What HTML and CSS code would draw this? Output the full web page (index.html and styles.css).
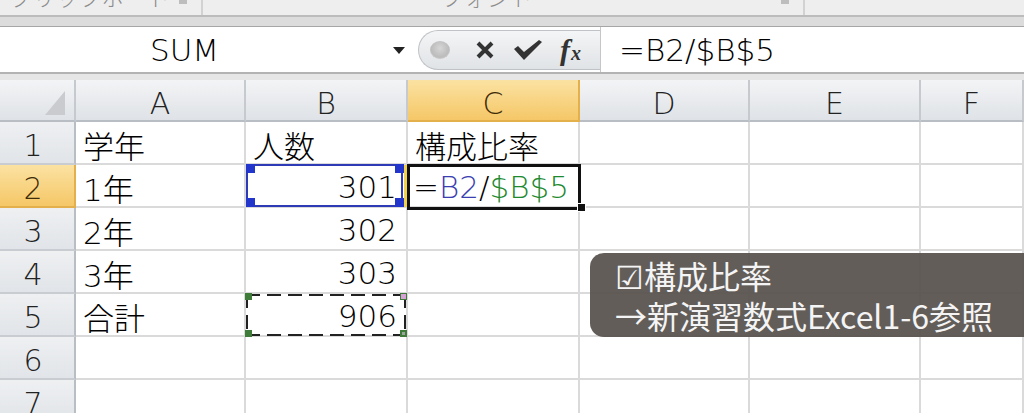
FILE: index.html
```html
<!DOCTYPE html>
<html lang="ja">
<head>
<meta charset="utf-8">
<title>Excel 構成比率</title>
<link rel="stylesheet" href="styles.css">
</head>
<body>
<div class="screen">
  <div class="ribbon">
    <div class="rgroup g1"><span class="rlabel">クリップボード</span><span class="launch"></span></div>
    <div class="rgroup g2"><span class="rlabel">フォント</span><span class="launch"></span></div>
    <div class="rgroup g3"></div>
  </div>
  <div class="sep1"></div>
  <div class="fbar">
    <div class="namebox"><span class="name">SUM</span><span class="arrow"></span></div>
    <div class="pill">
      <span class="knob"></span>
      <svg class="ico-x" width="20" height="20" viewBox="0 0 20 20"><path d="M3 3 L17 17 M17 3 L3 17" stroke="#333" stroke-width="4" fill="none"/></svg>
      <svg class="ico-check" width="30" height="22" viewBox="0 0 30 22"><path d="M1 10 L5 7 L11 13 L26 1 L29 3 L11 21 Z" fill="#333"/></svg>
      <span class="fx"><i class="fx-f">f</i><i class="fx-x">x</i></span>
    </div>
    <div class="finput">=B2/$B$5</div>
  </div>
  <div class="sep2"></div>
  <div class="sheet">
    <div class="ch corner"><svg width="20" height="24" viewBox="0 0 20 24"><polygon points="20,0 20,24 0,24" fill="#c9cbce"/></svg></div>
    <div class="ch">A</div>
    <div class="ch">B</div>
    <div class="ch hl">C</div>
    <div class="ch">D</div>
    <div class="ch">E</div>
    <div class="ch">F</div>

    <div class="rh">1</div>
    <div class="c">学年</div>
    <div class="c">人数</div>
    <div class="c">構成比率</div>
    <div class="c"></div>
    <div class="c"></div>
    <div class="c"></div>

    <div class="rh hl">2</div>
    <div class="c">1年</div>
    <div class="c num">301<span class="ref-blue"><span class="k tl"></span><span class="k tr"></span><span class="k bl"></span><span class="k br"></span></span><span class="yl"></span></div>
    <div class="c edit">=<span class="blue">B2</span>/<span class="green">$B$5</span><span class="active"></span><span class="handle"></span></div>
    <div class="c"></div>
    <div class="c"></div>
    <div class="c"></div>

    <div class="rh">3</div>
    <div class="c">2年</div>
    <div class="c num">302</div>
    <div class="c"></div>
    <div class="c"></div>
    <div class="c"></div>
    <div class="c"></div>

    <div class="rh">4</div>
    <div class="c">3年</div>
    <div class="c num">303</div>
    <div class="c"></div>
    <div class="c"></div>
    <div class="c"></div>
    <div class="c"></div>

    <div class="rh">5</div>
    <div class="c">合計</div>
    <div class="c num">906<span class="ants"><span class="g tl"></span><span class="g tr"></span><span class="g bl"></span><span class="g br"></span></span></div>
    <div class="c"></div>
    <div class="c"></div>
    <div class="c"></div>
    <div class="c"></div>

    <div class="rh">6</div>
    <div class="c"></div>
    <div class="c"></div>
    <div class="c"></div>
    <div class="c"></div>
    <div class="c"></div>
    <div class="c"></div>

    <div class="rh">7</div>
    <div class="c"></div>
    <div class="c"></div>
    <div class="c"></div>
    <div class="c"></div>
    <div class="c"></div>
    <div class="c"></div>
  </div>
  <div class="note">
    <div class="nline">☑構成比率</div>
    <div class="nline">→新演習数式Excel1-6参照</div>
  </div>
</div>
</body>
</html>
```

FILE: styles.css
```css
* { box-sizing: border-box; }
html, body { margin: 0; padding: 0; background: #fff; }
.screen {
  width: 1024px;
  height: 413px;
  overflow: hidden;
  position: relative;
  background: #fff;
  font-family: "DejaVu Sans", "Noto Sans CJK JP", sans-serif;
  font-weight: 300;
  color: #000;
}

/* ribbon group labels (cut off at top) */
.ribbon { display: flex; height: 15px; background: #eeeeee; overflow: hidden; }
.rgroup { display: flex; align-items: flex-start; border-right: 2px solid #d2d2d2; height: 15px; }
.g1 { width: 203px; padding-left: 10px; }
.g2 { width: 602px; padding-left: 238px; }
.g3 { flex: 1; border-right: none; }
.rlabel {
  font-family: "Noto Sans CJK JP", sans-serif;
  font-size: 22px;
  line-height: 22px;
  margin-top: -15px;
  color: #8c8c8c;
  letter-spacing: 1px;
}
.launch { margin-left: auto; margin-right: 14px; width: 8px; height: 4px; background: #bdbdbd; }

.sep1 { height: 12px; border-top: 2px solid #bcbcbc; border-bottom: 1px solid #a6a6a6; background: #dcdcdc; }

/* formula bar */
.fbar { display: flex; height: 47px; background: #fff; border-bottom: 2px solid #b3b3b3; }
.namebox { width: 418px; display: flex; align-items: center; padding-top: 1px; }
.name { margin-left: 150px; font-size: 31px; color: #000; }
.arrow {
  margin-left: auto;
  margin-right: 13px;
  width: 0; height: 0;
  border-left: 6px solid transparent;
  border-right: 6px solid transparent;
  border-top: 7px solid #222;
}
.pill {
  width: 182px;
  height: 40px;
  margin-top: 3px;
  border: 1px solid #bfc3c7;
  border-right: none;
  border-radius: 20px 0 0 20px;
  background: linear-gradient(#f4f5f6, #e0e3e6);
  display: flex;
  align-items: center;
}
.knob {
  margin-left: 11px;
  width: 20px; height: 18px;
  border-radius: 50%;
  background: radial-gradient(circle at 50% 40%, #d6d6d6, #bcbcbc 60%, #e4e4e4 100%);
}
.ico-x { margin-left: 25px; }
.ico-check { margin-left: 18px; }
.fx { margin-left: 17px; font-family: "Liberation Serif", serif; font-weight: bold; color: #333; display: flex; align-items: baseline; }
.fx-f { font-size: 30px; }
.fx-x { font-size: 20px; margin-left: 1px; }
.finput {
  flex: 1;
  border-left: 1px solid #c6c6c6;
  padding-left: 18px;
  padding-top: 1px;
  display: flex;
  align-items: center;
  font-size: 31px;
  color: #000;
}

.sep2 { height: 6px; background: #e6e6e6; }

/* sheet grid */
.sheet {
  display: grid;
  grid-template-columns: 76px 170px 162px 172px 170px 171px 1fr;
  grid-template-rows: 42px repeat(7, 43px);
}
.c {
  position: relative;
  border-right: 2px solid #dadada;
  border-bottom: 2px solid #dadada;
  font-size: 31px;
  display: flex;
  align-items: center;
  padding: 3px 7px 0 7px;
  white-space: nowrap;
  color: #000;
}
.num { justify-content: flex-end; padding-right: 9px; }
.ch {
  background: linear-gradient(#f3f4f6, #dfe2e6);
  border-right: 2px solid #c6cacf;
  border-bottom: 2px solid #b9bec4;
  display: flex;
  align-items: center;
  justify-content: center;
  padding-top: 6px;
  font-size: 30px;
  color: #222;
}
.corner { justify-content: flex-end; align-items: flex-end; padding: 0 9px 5px 0; }
.rh {
  background: linear-gradient(#eef0f2, #e1e4e8);
  border-right: 2px solid #b9bec4;
  border-bottom: 2px solid #c9cdd2;
  display: flex;
  align-items: center;
  justify-content: center;
  padding: 5px 8px 0 0;
  font-size: 30px;
  color: #222;
}
.hl {
  background: linear-gradient(#fbe2a2, #f5c767);
  color: #3f2c08;
  border-bottom-color: #e3b04c;
  border-right-color: #e3b04c;
}

/* formula in edit cell */
.edit { padding-left: 5px; }
.blue { color: #3a3eb0; }
.green { color: #1e8a2f; }

/* referenced range B2 (blue) */
.ref-blue {
  position: absolute;
  left: 0; top: -1px;
  width: 157px; height: 43px;
  border: 2px solid #2d3cb6;
  z-index: 2;
}
.k { position: absolute; width: 9px; height: 9px; background: #2336cc; }
.k.tl { left: -2px; top: -2px; }
.k.tr { right: -3px; top: -2px; }
.k.bl { left: -2px; bottom: -2px; }
.k.br { right: -3px; bottom: -2px; }
.yl { position: absolute; left: 158px; top: 0; width: 3px; height: 42px; background: #f0d24c; z-index: 2; }

/* active cell C2 */
.active {
  position: absolute;
  left: -1px; top: -1px;
  width: 174px; height: 46px;
  border: 3px solid #111;
  z-index: 3;
}
.handle {
  position: absolute;
  left: 169px; top: 38px;
  width: 9px; height: 9px;
  background: #111;
  border: 1px solid #fff;
  z-index: 4;
}

/* marching ants on B5 */
.ants {
  position: absolute;
  left: 0; top: 0;
  width: 160px; height: 42px;
  z-index: 2;
  background:
    repeating-linear-gradient(90deg, #222 0 14px, transparent 14px 21px) left top / 100% 2px no-repeat,
    repeating-linear-gradient(90deg, #222 0 14px, transparent 14px 21px) left bottom / 100% 2px no-repeat,
    repeating-linear-gradient(180deg, #222 0 14px, transparent 14px 21px) left top / 2px 100% no-repeat,
    repeating-linear-gradient(180deg, #222 0 14px, transparent 14px 21px) right top / 2px 100% no-repeat;
}
.g { position: absolute; width: 7px; height: 7px; background: #3f7c3a; }
.g.tl { left: -1px; top: -1px; }
.g.tr { right: -1px; top: -1px; background: #d7a3d6; border: 1px solid #3f7c3a; }
.g.bl { left: -1px; bottom: -1px; }
.g.br { right: -1px; bottom: -1px; background: #9aa79a; border: 2px solid #3f7c3a; }

/* caption overlay */
.note {
  position: absolute;
  left: 590px;
  top: 253px;
  width: 470px;
  height: 84px;
  border-radius: 14px;
  background: rgba(88, 83, 79, 0.94);
  color: #f4f4f4;
  font-family: "Noto Sans CJK JP", sans-serif;
  font-weight: 400;
  font-size: 32px;
  padding: 2px 0 0 25px;
  z-index: 5;
}
.nline { height: 40px; line-height: 40px; white-space: nowrap; }
```
